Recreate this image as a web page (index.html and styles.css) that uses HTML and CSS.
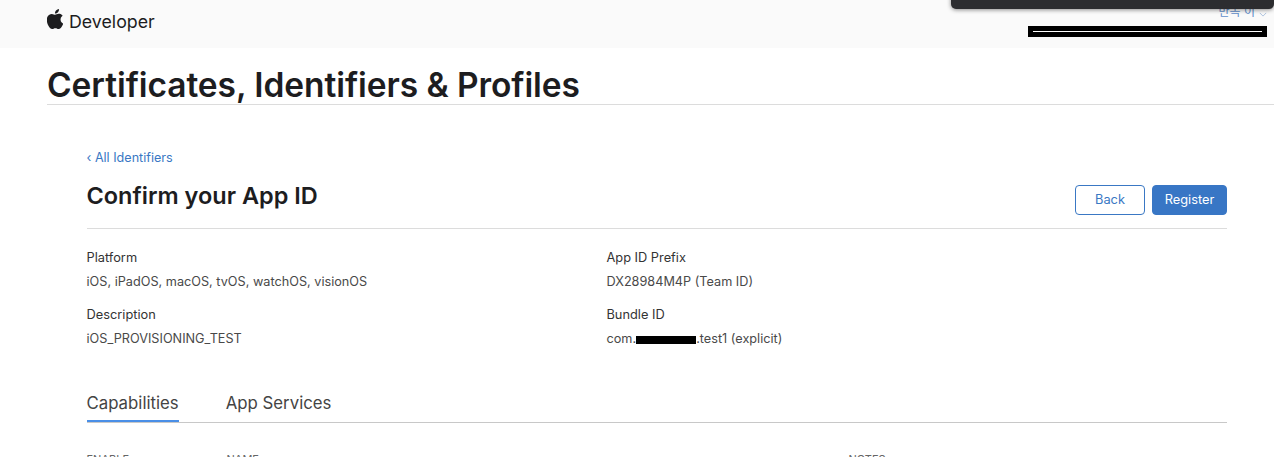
FILE: index.html
```html
<!DOCTYPE html>
<html lang="ko">
<head>
  <meta charset="UTF-8" />
  <title>Certificates, Identifiers &amp; Profiles</title>
  <link rel="stylesheet" href="styles.css">
</head>
<body>
  <header class="topbar">
    <div class="brand">
      <svg class="apple" viewBox="2.5 0 19 24" preserveAspectRatio="none" aria-hidden="true">
        <path d="M12.152 6.896c-.948 0-2.415-1.078-3.96-1.04-2.04.027-3.91 1.183-4.961 3.014-2.117 3.675-.546 9.103 1.519 12.09 1.013 1.454 2.208 3.09 3.792 3.039 1.52-.065 2.09-.987 3.935-.987 1.831 0 2.35.987 3.96.948 1.637-.026 2.676-1.48 3.676-2.948 1.156-1.688 1.636-3.325 1.662-3.415-.039-.013-3.182-1.221-3.22-4.857-.026-3.04 2.48-4.494 2.597-4.559-1.429-2.09-3.623-2.324-4.39-2.376-2-.156-3.675 1.09-4.61 1.09zM15.53 3.83c.843-1.012 1.4-2.427 1.245-3.83-1.207.052-2.662.805-3.532 1.818-.78.896-1.454 2.338-1.273 3.714 1.338.104 2.715-.688 3.559-1.701"/>
      </svg>
      <span class="brand-name">Developer</span>
    </div>
    <div class="account">
      <span class="account-name">만녹 이</span>
      <svg class="chevron" viewBox="0 0 10 6" aria-hidden="true"><path d="M1 1l4 4 4-4"/></svg>
    </div>
    <div class="popover"></div>
    <div class="redact-bar"><span></span></div>
  </header>

  <div class="title-wrap">
    <h1>Certificates, Identifiers &amp; Profiles</h1>
  </div>

  <main class="content">
    <a class="back-link" href="#">‹ All Identifiers</a>
    <div class="page-head">
      <h2>Confirm your App ID</h2>
      <div class="actions">
        <button type="button" class="btn btn-outline">Back</button>
        <button type="button" class="btn btn-solid">Register</button>
      </div>
    </div>

    <div class="details">
      <div class="field">
        <div class="field-label">Platform</div>
        <div class="field-value">iOS, iPadOS, macOS, tvOS, watchOS, visionOS</div>
      </div>
      <div class="field">
        <div class="field-label">App ID Prefix</div>
        <div class="field-value">DX28984M4P (Team ID)</div>
      </div>
      <div class="field">
        <div class="field-label">Description</div>
        <div class="field-value">iOS_PROVISIONING_TEST</div>
      </div>
      <div class="field">
        <div class="field-label">Bundle ID</div>
        <div class="field-value">com.<span class="redact"></span>.test1 (explicit)</div>
      </div>
    </div>

    <nav class="tabs">
      <a class="tab tab-active" href="#">Capabilities</a>
      <a class="tab" href="#">App Services</a>
    </nav>

    <div class="table-head">
      <span class="col-enable">ENABLE</span>
      <span class="col-name">NAME</span>
      <span class="col-notes">NOTES</span>
    </div>
  </main>
</body>
</html>
```

FILE: styles.css
```css
* {
  margin: 0;
  padding: 0;
  box-sizing: border-box;
}
html, body {
  height: 457px;
  overflow: hidden;
}
body {
  background: #fff;
  font-family: Inter, "Noto Sans CJK KR", sans-serif;
  color: #1d1d1f;
}
.topbar {
  position: relative;
  height: 48px;
  background: #fafafa;
  padding: 0 7px 0 47px;
  display: flex;
  justify-content: space-between;
}
.brand {
  display: flex;
  align-items: flex-start;
  gap: 6px;
  padding-top: 9px;
}
.apple {
  width: 16px;
  height: 20px;
  fill: #1d1d1f;
}
.brand-name {
  font-size: 17.8px;
  line-height: 26px;
  color: #1d1d1f;
}
.account {
  display: flex;
  align-items: flex-start;
  gap: 4px;
  padding-top: 4px;
}
.account-name {
  font-size: 12px;
  line-height: 16px;
  color: #5f8fcb;
}
.chevron {
  width: 8px;
  height: 5px;
  margin-top: 8px;
  fill: none;
  stroke: #9db8d8;
  stroke-width: 1;
}
.popover {
  position: absolute;
  top: -10px;
  left: 951px;
  right: 0;
  height: 19px;
  background: #2c2d30;
  border-radius: 0 0 5px 5px;
  box-shadow: 0 1px 4px rgba(0, 0, 0, 0.45);
}
.redact-bar {
  position: absolute;
  top: 26px;
  left: 1028px;
  width: 239px;
  height: 11px;
  background: #000;
  padding: 5px 5px 0;
}
.redact-bar span {
  display: block;
  height: 1px;
  background: #fff;
}
.title-wrap {
  margin: 0 0 0 47px;
  height: 57px;
  border-bottom: 1px solid #dcdcdc;
}
h1 {
  font-size: 33.5px;
  font-weight: 600;
  line-height: 39px;
  padding-top: 18px;
  letter-spacing: -0.07px;
  color: #1d1d1f;
}
.content {
  padding: 45px 47px 0 86.5px;
}
.back-link {
  display: block;
  font-size: 12.6px;
  line-height: 16px;
  color: #3a78c4;
  text-decoration: none;
}
.page-head {
  display: flex;
  justify-content: space-between;
  height: 63px;
  padding-top: 15px;
  border-bottom: 1px solid #dcdcdc;
}
h2 {
  font-size: 23.5px;
  font-weight: 600;
  line-height: 30px;
  color: #1d1d1f;
}
.actions {
  display: flex;
  gap: 7px;
  padding-top: 4px;
}
.btn {
  height: 30px;
  padding-bottom: 2px;
  border-radius: 4px;
  font-family: inherit;
  font-size: 12.8px;
  cursor: pointer;
}
.btn-outline {
  width: 70px;
  background: #fff;
  border: 1px solid #3a78c4;
  color: #3a78c4;
}
.btn-solid {
  width: 75px;
  background: #3876c5;
  border: 1px solid #3876c5;
  color: #fff;
}
.details {
  display: grid;
  grid-template-columns: 520px 1fr;
  row-gap: 17px;
  padding-top: 21px;
}
.field-label {
  font-size: 12.8px;
  line-height: 16px;
  color: #333;
}
.field-value {
  font-size: 12.7px;
  line-height: 16px;
  margin-top: 8px;
  color: #494949;
}
.redact {
  display: inline-block;
  width: 60px;
  height: 8px;
  background: #000;
  vertical-align: -1px;
}
.tabs {
  display: flex;
  gap: 47px;
  margin-top: 41px;
  height: 35px;
  border-bottom: 1px solid #c8c8c8;
}
.tab {
  height: 34px;
  font-size: 16.8px;
  line-height: 30px;
  color: #444;
  text-decoration: none;
}
.tab-active {
  border-bottom: 2px solid #4a8fe7;
}
.table-head {
  display: flex;
  margin-top: 29px;
  font-size: 11px;
  line-height: 14px;
  color: #666;
}
.col-enable {
  width: 140px;
}
.col-name {
  width: 622px;
}
```
